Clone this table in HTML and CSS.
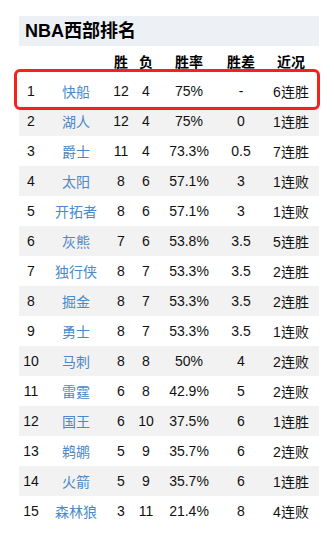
FILE: index.html
```html
<!DOCTYPE html>
<html lang="zh">
<head>
<meta charset="utf-8">
<link rel="stylesheet" href="styles.css">
</head>
<body>
<div class="panel">
  <div class="title">NBA西部排名</div>
  <div class="row head"><span></span><span></span><span>胜</span><span>负</span><span>胜率</span><span>胜差</span><span>近况</span></div>
  <div class="row"><span>1</span><span class="team">快船</span><span>12</span><span>4</span><span>75%</span><span>-</span><span>6连胜</span></div>
  <div class="row alt"><span>2</span><span class="team">湖人</span><span>12</span><span>4</span><span>75%</span><span>0</span><span>1连胜</span></div>
  <div class="row"><span>3</span><span class="team">爵士</span><span>11</span><span>4</span><span>73.3%</span><span>0.5</span><span>7连胜</span></div>
  <div class="row alt"><span>4</span><span class="team">太阳</span><span>8</span><span>6</span><span>57.1%</span><span>3</span><span>1连败</span></div>
  <div class="row"><span>5</span><span class="team">开拓者</span><span>8</span><span>6</span><span>57.1%</span><span>3</span><span>1连败</span></div>
  <div class="row alt"><span>6</span><span class="team">灰熊</span><span>7</span><span>6</span><span>53.8%</span><span>3.5</span><span>5连胜</span></div>
  <div class="row"><span>7</span><span class="team">独行侠</span><span>8</span><span>7</span><span>53.3%</span><span>3.5</span><span>2连胜</span></div>
  <div class="row alt"><span>8</span><span class="team">掘金</span><span>8</span><span>7</span><span>53.3%</span><span>3.5</span><span>2连胜</span></div>
  <div class="row"><span>9</span><span class="team">勇士</span><span>8</span><span>7</span><span>53.3%</span><span>3.5</span><span>1连败</span></div>
  <div class="row alt"><span>10</span><span class="team">马刺</span><span>8</span><span>8</span><span>50%</span><span>4</span><span>2连败</span></div>
  <div class="row"><span>11</span><span class="team">雷霆</span><span>6</span><span>8</span><span>42.9%</span><span>5</span><span>2连败</span></div>
  <div class="row alt"><span>12</span><span class="team">国王</span><span>6</span><span>10</span><span>37.5%</span><span>6</span><span>1连胜</span></div>
  <div class="row"><span>13</span><span class="team">鹈鹕</span><span>5</span><span>9</span><span>35.7%</span><span>6</span><span>2连败</span></div>
  <div class="row alt"><span>14</span><span class="team">火箭</span><span>5</span><span>9</span><span>35.7%</span><span>6</span><span>1连胜</span></div>
  <div class="row"><span>15</span><span class="team">森林狼</span><span>3</span><span>11</span><span>21.4%</span><span>8</span><span>4连败</span></div>
  <div class="highlight"></div>
</div>
</body>
</html>
```

FILE: styles.css
```css
html, body {
  margin: 0;
  padding: 0;
  background: #ffffff;
}
body {
  font-family: "Liberation Sans", "Noto Sans CJK SC", sans-serif;
  color: #111111;
}
.panel {
  position: relative;
  width: 300px;
  margin: 16px 0 0 19px;
}
.title {
  height: 30px;
  line-height: 30px;
  background: #edf1f5;
  padding-left: 6px;
  font-size: 18px;
  font-weight: bold;
  color: #000;
}
.row {
  display: grid;
  grid-template-columns: 24px 66px 24px 26px 60px 44px 56px;
  height: 30px;
  align-items: center;
  font-size: 14px;
  text-align: center;
}
.row span {
  white-space: nowrap;
}
.row.alt {
  background: #f2f2f2;
}
.row.head {
  font-weight: bold;
  color: #000;
}
.team {
  color: #4b89c9;
}
.highlight {
  position: absolute;
  left: -5px;
  top: 53px;
  width: 300px;
  height: 35px;
  border: 3px solid #f5221b;
  border-radius: 6px;
}
```
